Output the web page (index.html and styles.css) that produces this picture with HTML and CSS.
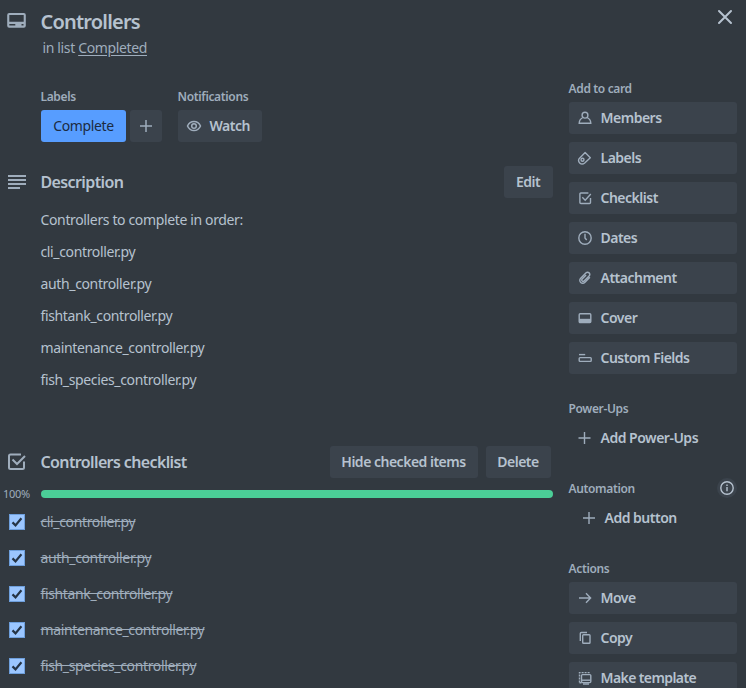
FILE: index.html
```html
<!DOCTYPE html>
<html lang="en">
<head>
<meta charset="utf-8">
<title>Controllers</title>
<link rel="stylesheet" href="styles.css">
</head>
<body>
<div class="card">
  <header class="card-header">
    <svg class="header-icon" width="24" height="24" viewBox="0 0 24 24"><path fill="currentColor" fill-rule="evenodd" d="M4.200 4h14.600a2 2 0 0 1 2 2v10.800a2 2 0 0 1-2 2H4.200a2 2 0 0 1-2-2V6a2 2 0 0 1 2-2zM4.300 6v6.800h14.400V6zM4.300 15v1.600h6V15zM16.500 15v1.600h2V15z"/></svg>
    <div class="header-text">
      <h1>Controllers</h1>
      <p class="in-list">in list <a>Completed</a></p>
    </div>
    <svg class="close" width="16" height="16" viewBox="0 0 16 16" fill="none" stroke="currentColor" stroke-width="2" stroke-linecap="round"><path d="M2 2l12 12M14 2L2 14"/></svg>
  </header>
  <div class="columns">
    <main>
      <div class="meta">
        <section>
          <h3>Labels</h3>
          <div class="meta-row">
            <span class="label">Complete</span>
            <button class="btn plus"><svg width="16" height="16" viewBox="0 0 16 16" fill="none" stroke="currentColor" stroke-width="1.5"><path d="M8 2v12M2 8h12"/></svg></button>
          </div>
        </section>
        <section>
          <h3>Notifications</h3>
          <button class="btn watch"><svg width="16" height="16" viewBox="0 0 16 16" fill="none" stroke="currentColor" stroke-width="1.5"><path d="M1.500 8C2.800 5 5 3.400 8 3.400S13.200 5 14.500 8C13.200 11 11 12.600 8 12.600S2.800 11 1.500 8z"/><circle cx="8" cy="8" r="2.300"/></svg><span>Watch</span></button>
        </section>
      </div>
      <section class="description">
        <div class="section-head">
          <svg class="section-icon" width="24" height="24" viewBox="0 0 24 24" fill="none" stroke="currentColor" stroke-width="2"><path d="M3 6h18M3 10h18M3 14h18M3 18h12"/></svg>
          <h2>Description</h2>
          <button class="btn edit"><span>Edit</span></button>
        </div>
        <div class="prose">
          <p>Controllers to complete in order:</p>
          <p>cli_controller.py</p>
          <p>auth_controller.py</p>
          <p>fishtank_controller.py</p>
          <p>maintenance_controller.py</p>
          <p>fish_species_controller.py</p>
        </div>
      </section>
      <section class="checklist">
        <div class="section-head">
          <svg class="section-icon" width="24" height="24" viewBox="0 0 24 24" fill="none" stroke="currentColor" stroke-width="2"><path d="M16 4.500H5.500a1.500 1.500 0 0 0-1.500 1.500v11.500a1.500 1.500 0 0 0 1.500 1.500h12a1.500 1.500 0 0 0 1.500-1.500v-6"/><path d="M7.500 9.500l4.500 4.500L20 6"/></svg>
          <h2>Controllers checklist</h2>
          <button class="btn hide"><span>Hide checked items</span></button>
          <button class="btn delete"><span>Delete</span></button>
        </div>
        <div class="progress"><span>100%</span><div class="track"></div></div>
        <ul>
          <li><i class="box"><svg width="16" height="16" viewBox="0 0 16 16"><path d="M3.500 8.400l3 3L12.400 4.200"/></svg></i><s>cli_controller.py</s></li>
          <li><i class="box"><svg width="16" height="16" viewBox="0 0 16 16"><path d="M3.500 8.400l3 3L12.400 4.200"/></svg></i><s>auth_controller.py</s></li>
          <li><i class="box"><svg width="16" height="16" viewBox="0 0 16 16"><path d="M3.500 8.400l3 3L12.400 4.200"/></svg></i><s>fishtank_controller.py</s></li>
          <li><i class="box"><svg width="16" height="16" viewBox="0 0 16 16"><path d="M3.500 8.400l3 3L12.400 4.200"/></svg></i><s>maintenance_controller.py</s></li>
          <li><i class="box"><svg width="16" height="16" viewBox="0 0 16 16"><path d="M3.500 8.400l3 3L12.400 4.200"/></svg></i><s>fish_species_controller.py</s></li>
        </ul>
      </section>
    </main>
    <aside>
      <section>
        <h3>Add to card</h3>
        <button class="btn side"><svg width="16" height="16" viewBox="0 0 16 16"><circle cx="8" cy="5.200" r="2.900"/><path d="M5.800 7.500C3.700 8.600 2.300 10.500 2.200 13.300h11.600c-.1-2.800-1.500-4.700-3.600-5.800"/></svg><span>Members</span></button>
        <button class="btn side"><svg width="16" height="16" viewBox="0 0 16 16"><path d="M8.100 2.500L13.300 7.700 7.700 13C5.800 14.600 3.800 14 2.700 12.900 1.500 11.700 1.200 10 2.300 8.400z" stroke-linejoin="round"/><circle cx="5.500" cy="9.800" r="1.500"/></svg><span>Labels</span></button>
        <button class="btn side"><svg width="16" height="16" viewBox="0 0 16 16"><path d="M11.400 3H3.900a1 1 0 0 0-1 1v8.500a1 1 0 0 0 1 1h8.600a1 1 0 0 0 1-1V8M5.300 7.300l2.900 2.900L13.800 4"/></svg><span>Checklist</span></button>
        <button class="btn side"><svg width="16" height="16" viewBox="0 0 16 16"><circle cx="8" cy="8" r="6.200"/><path d="M8 3.800V8l1.700 2"/></svg><span>Dates</span></button>
        <button class="btn side"><svg width="16" height="16" viewBox="0 0 16 16"><path d="M12.900 7.200l-4.900 5c-2.900 2.900-7.100-1-4.300-4l5.100-5.100c2.300-2.300 5.500.7 3.300 2.900l-4.800 4.800c-1.500 1.500-3.500-.4-2.100-1.900l3.900-3.900"/></svg><span>Attachment</span></button>
        <button class="btn side"><svg width="16" height="16" viewBox="0 0 16 16"><rect x="2.200" y="3.700" width="11.600" height="8.800" rx="1"/><path d="M2 8.800h12v3.700H2z" fill="currentColor" stroke="none"/></svg><span>Cover</span></button>
        <button class="btn side"><svg width="16" height="16" viewBox="0 0 16 16"><path d="M2 4.600h6.200"/><rect x="2.200" y="7.600" width="12" height="3.800" rx=".8"/></svg><span>Custom Fields</span></button>
      </section>
      <section>
        <h3>Power-Ups</h3>
        <button class="btn side bare"><svg width="16" height="16" viewBox="0 0 16 16"><path d="M7.500 2v12M1.500 8h12"/></svg><span>Add Power-Ups</span></button>
      </section>
      <section>
        <div class="automation"><h3>Automation</h3><i class="info"><svg width="16" height="16" viewBox="0 0 16 16" fill="none" stroke="currentColor" stroke-width="1.400"><circle cx="8" cy="8" r="6.200"/><path d="M8 7v4.200M8 4.600v1.500"/></svg></i></div>
        <button class="btn side bare indent"><svg width="16" height="16" viewBox="0 0 16 16"><path d="M8 2v12M2 8h12"/></svg><span>Add button</span></button>
      </section>
      <section>
        <h3>Actions</h3>
        <button class="btn side"><svg width="16" height="16" viewBox="0 0 16 16"><path d="M2 8h11.500M9 3.300L13.600 8 9 12.700"/></svg><span>Move</span></button>
        <button class="btn side"><svg width="16" height="16" viewBox="0 0 16 16"><path d="M3.300 11V3.500a1 1 0 0 1 1-1H10"/><rect x="5.700" y="4.800" width="7.300" height="8.500" rx=".8"/></svg><span>Copy</span></button>
        <button class="btn side"><svg width="16" height="16" viewBox="0 0 16 16"><rect x="4.500" y="4.600" width="9.300" height="8" rx="1"/><path d="M5 10.200h8.500"/><path d="M2.500 12.500V2.600H13" stroke-dasharray="2 1"/><path d="M2.500 12.800h2M6 14h6"/></svg><span class="template">Make template</span></button>
      </section>
    </aside>
  </div>
</div>
</body>
</html>
```

FILE: styles.css
```css
* { box-sizing: border-box; margin: 0; padding: 0; }
body { width: 746px; height: 688px; overflow: hidden; background: #323940; color: #b6c2cf; font: 14px/20px "Noto Sans", "Open Sans", sans-serif; letter-spacing: -0.36px; }
svg { display: block; flex: none; }
h1, h2, h3 { font-weight: 600; }
.card { height: 688px; overflow: hidden; }
.card-header { display: flex; height: 78px; padding: 9px 13px 0 5px; color: #b6c2cf; }
.header-icon { color: #9fadbc; }
.header-text { flex: 1; margin-left: 11.500px; padding-top: 1px; }
h1 { font-size: 20px; line-height: 24px; letter-spacing: -0.8px; }
.in-list { margin: 4px 0 0 2px; color: #9fadbc; }
.in-list a { text-decoration: underline; text-underline-offset: 2px; }
.columns { display: grid; grid-template-columns: 553px 168px; gap: 16px; }
h3 { height: 20px; font-size: 12px; line-height: 22px; color: #9fadbc; letter-spacing: -0.35px; }
.btn { display: flex; align-items: center; justify-content: center; height: 32px; border: 0; border-radius: 3px; background: #3b434c; color: #b6c2cf; font: inherit; font-weight: 600; letter-spacing: -0.5px; white-space: nowrap; }
.btn svg { color: #9fadbc; }
.btn span { position: relative; left: -0.5px; }
.meta { display: flex; gap: 16px; padding: 9px 0 0 41px; }
.meta h3 { margin: 0 0 3px -0.5px; line-height: 20px; }
.meta-row { display: flex; gap: 4px; }
.label { width: 85px; height: 32px; border-radius: 3px; background: #579dff; color: #1c2b41; line-height: 32px; text-align: center; }
.plus { width: 32px; }
.watch { width: 84px; gap: 8px; justify-content: flex-start; padding-left: 8px; }
.section-head { display: flex; align-items: center; height: 32px; }
.section-icon { margin: 0 11.500px 0 5px; color: #9fadbc; }
h2 { flex: 1; font-size: 16px; line-height: 20px; letter-spacing: -0.62px; }
.description { padding-top: 24px; }
.edit { width: 49px; }
.prose { display: grid; gap: 12px; padding: 12px 0 0 40.500px; }
.checklist { padding-top: 56px; }
.hide { width: 148px; margin-right: 8px; }
.delete { width: 65px; margin-right: 2px; }
.progress { display: flex; align-items: center; height: 26px; padding: 6px 0 0 3px; }
.progress span { width: 38px; font-size: 11px; color: #9fadbc; line-height: 20px; letter-spacing: -0.3px; }
.track { flex: 1; height: 8px; border-radius: 4px; background: #4bce97; }
ul { list-style: none; }
li { display: flex; align-items: center; height: 36px; padding-left: 9px; color: #9fadbc; }
.box { width: 16px; height: 16px; margin-right: 15.500px; background: #9bc6ff; border: 1px solid #6e9fdc; }
.box svg { margin: -1px; fill: none; stroke: #253446; stroke-width: 2.2; }
aside section { display: grid; gap: 8px; margin-bottom: 24px; }
aside h3 { margin: 0 0 -4px -0.5px; }
.side { justify-content: flex-start; gap: 8px; padding-left: 8px; }
.side svg { fill: none; stroke: currentColor; stroke-width: 1.4; }
.btn .template { letter-spacing: -0.6px; }
.bare { background: transparent; }
.indent { padding-left: 12px; }
.automation { display: flex; justify-content: space-between; height: 16px; }
.info { width: 20px; height: 20px; padding: 2px; border-radius: 50%; background: #3b434c; }
```
